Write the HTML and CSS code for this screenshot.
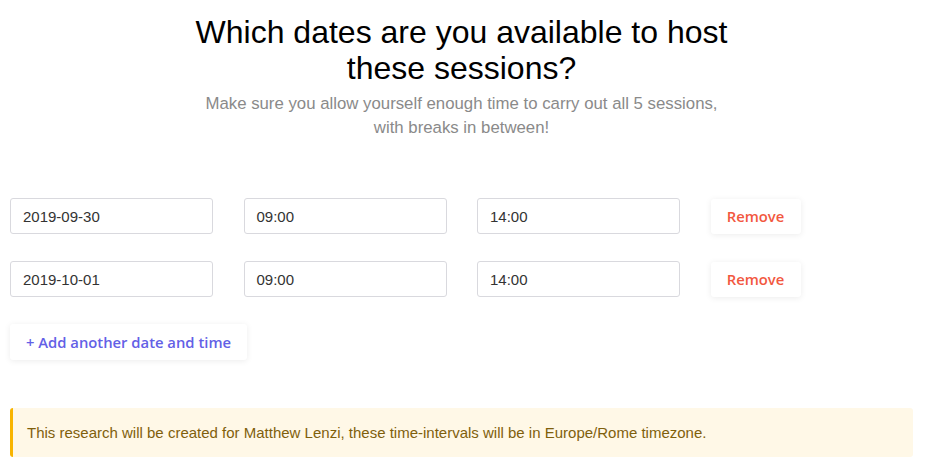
FILE: index.html
```html
<!DOCTYPE html>
<html>
<head>
<meta charset="utf-8">
<link rel="stylesheet" href="styles.css">
</head>
<body>
<div class="page">
  <header class="intro">
    <h1 class="title">Which dates are you available to host<br>these sessions?</h1>
    <p class="subtitle">Make sure you allow yourself enough time to carry out all 5 sessions,<br>with breaks in between!</p>
  </header>
  <div class="rows">
    <div class="row">
      <div class="field">2019-09-30</div>
      <div class="field">09:00</div>
      <div class="field">14:00</div>
      <button class="btn btn-remove">Remove</button>
    </div>
    <div class="row">
      <div class="field">2019-10-01</div>
      <div class="field">09:00</div>
      <div class="field">14:00</div>
      <button class="btn btn-remove">Remove</button>
    </div>
  </div>
  <button class="btn btn-add">+ Add another date and time</button>
  <div class="alert">This research will be created for Matthew Lenzi, these time-intervals will be in Europe/Rome timezone.</div>
</div>
</body>
</html>
```
FILE: styles.css
```css
* { box-sizing: border-box; }
html, body { margin: 0; padding: 0; background: #fff; }
body { font-family: "Liberation Sans", Arial, sans-serif; color: #111; }
.page { padding: 0 13px 0 10px; }
.intro { text-align: center; padding-top: 14px; }
.title {
  margin: 0;
  font-size: 32px;
  line-height: 36px;
  font-weight: 400;
  color: #000;
}
.subtitle {
  margin: 6px 0 0;
  font-size: 16.8px;
  line-height: 24px;
  color: #8a8a8a;
}
.rows { margin-top: 58px; display: flex; flex-direction: column; gap: 27px; }
.row { display: flex; align-items: center; gap: 30.5px; }
.field {
  width: 203px;
  height: 36px;
  border: 1px solid #d9d9de;
  border-radius: 3px;
  padding: 0 12px;
  display: flex;
  align-items: center;
  font-size: 15px;
  color: #333;
}
.btn {
  background: #fff;
  border: none;
  border-radius: 3px;
  box-shadow: 0 1px 6px rgba(0,0,0,0.08);
  font-family: "Open Sans", "Noto Sans", sans-serif;
  font-size: 15px;
  cursor: pointer;
}
.btn-remove {
  width: 90px;
  height: 35px;
  color: #f2583f;
  font-size: 14.8px;
  font-weight: 600;
}
.btn-add {
  margin-top: 27px;
  width: 237px;
  height: 36px;
  color: #6360e6;
  font-size: 14.8px;
  font-weight: 600;
  display: block;
}
.alert {
  margin-top: 48px;
  height: 49px;
  background: #fff8e7;
  border-left: 3px solid #f8b400;
  border-radius: 3px;
  padding: 0 14px;
  display: flex;
  align-items: center;
  font-size: 15px;
  color: #7f600c;
}
```
